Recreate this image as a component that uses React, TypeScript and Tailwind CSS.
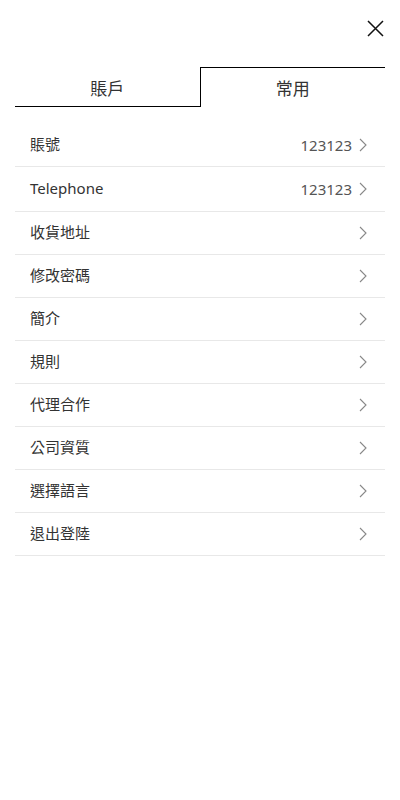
import React, { useState } from 'react';

const rows: { label: string; value?: string; h: string }[] = [
  { label: '賬號', value: '123123', h: 'h-[43px]' },
  { label: 'Telephone', value: '123123', h: 'h-[45px]' },
  { label: '收貨地址', h: 'h-[43px]' },
  { label: '修改密碼', h: 'h-[43px]' },
  { label: '簡介', h: 'h-[43px]' },
  { label: '規則', h: 'h-[43px]' },
  { label: '代理合作', h: 'h-[43px]' },
  { label: '公司資質', h: 'h-[43px]' },
  { label: '選擇語言', h: 'h-[43px]' },
  { label: '退出登陸', h: 'h-[43px]' },
];

const Chevron = () => (
  <svg width="8" height="14" viewBox="0 0 8 14" fill="none" className="ml-[7px]">
    <path d="M1 1l6 6-6 6" stroke="#888" strokeWidth="1.1" />
  </svg>
);

export default function App() {
  const [tab, setTab] = useState(1);

  return (
    <div
      className="w-[400px] min-h-[800px] bg-white text-[#333]"
      style={{ fontFamily: '"Noto Sans", "Noto Sans CJK TC", sans-serif' }}
    >
      <div className="flex justify-end pt-[20px] pr-[16px] h-[67px]">
        <button className="w-[17px] h-[17px]">
          <svg width="17" height="17" viewBox="0 0 17 17" fill="none">
            <path d="M1 1l15 15M16 1L1 16" stroke="#111" strokeWidth="1.5" />
          </svg>
        </button>
      </div>

      <div className="flex mx-[15px] h-[40px]">
        <button
          onClick={() => setTab(0)}
          className="flex-1 border-b border-black text-[17px] text-[#333] flex items-center justify-center pt-[5px]"
        >
          賬戶
        </button>
        <button
          onClick={() => setTab(1)}
          className="flex-1 border-t border-l border-black text-[17px] text-[#333] flex items-center justify-center pt-[3px]"
        >
          常用
        </button>
      </div>

      <ul className="mx-[15px] mt-[17px]">
        {rows.map((r) => (
          <li
            key={r.label}
            className={`${r.h} flex items-center justify-between pl-[15px] pr-[18px] border-b border-[#e8e8e8] text-[15px]`}
          >
            <span className="-mt-[1px]">{r.label}</span>
            <span className="flex items-center text-[#555]">
              {r.value}
              <Chevron />
            </span>
          </li>
        ))}
      </ul>
      {tab === 0 && null}
    </div>
  );
}
